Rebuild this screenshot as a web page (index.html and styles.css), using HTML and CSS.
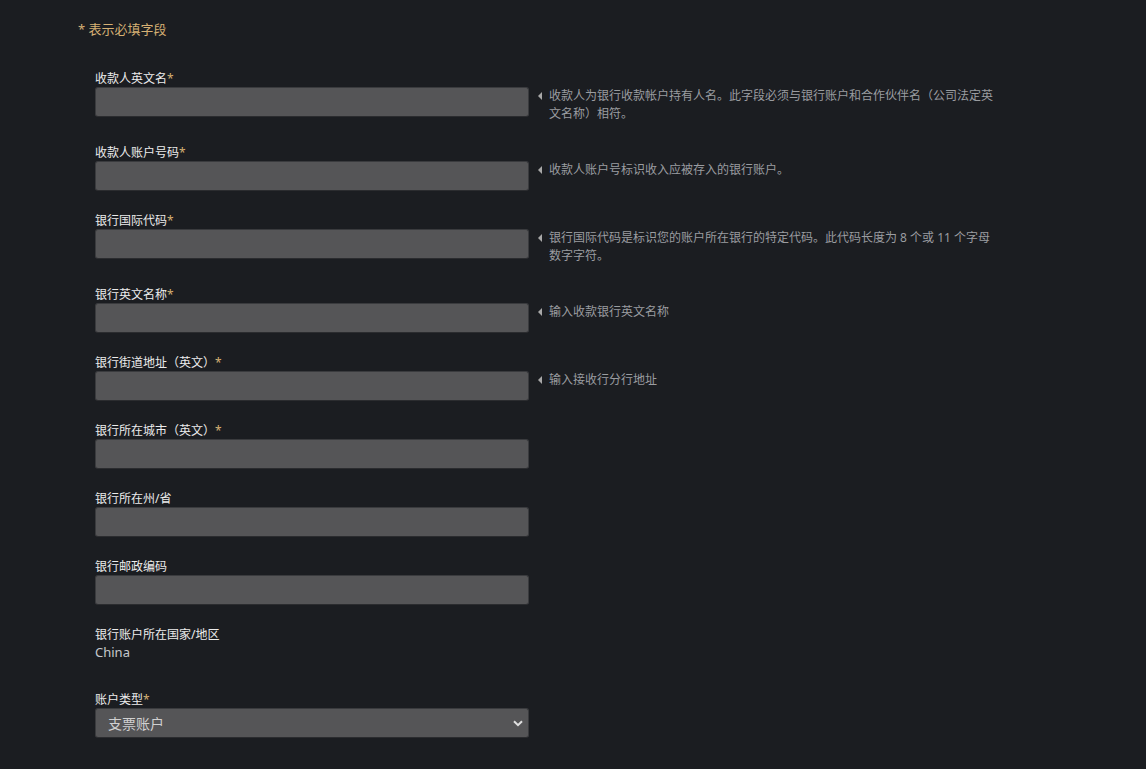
FILE: index.html
```html
<!DOCTYPE html>
<html lang="zh-CN">
<head>
    <meta charset="UTF-8">
    <title>银行账户信息</title>
    <link rel="stylesheet" href="styles.css">
</head>
<body>
    <div class="page">
        <p class="required-note">* 表示必填字段</p>

        <div class="fields">
            <div class="field">
                <label for="payeeName">收款人英文名<span class="star">*</span></label>
                <div class="field-row">
                    <input type="text" id="payeeName">
                    <div class="hint">收款人为银行收款帐户持有人名。此字段必须与银行账户和合作伙伴名（公司法定英文名称）相符。</div>
                </div>
            </div>

            <div class="field">
                <label for="accountNo">收款人账户号码<span class="star">*</span></label>
                <div class="field-row">
                    <input type="text" id="accountNo">
                    <div class="hint">收款人账户号标识收入应被存入的银行账户。</div>
                </div>
            </div>

            <div class="field">
                <label for="swift">银行国际代码<span class="star">*</span></label>
                <div class="field-row">
                    <input type="text" id="swift">
                    <div class="hint">银行国际代码是标识您的账户所在银行的特定代码。此代码长度为 8 个或 11 个字母数字字符。</div>
                </div>
            </div>

            <div class="field">
                <label for="bankName">银行英文名称<span class="star">*</span></label>
                <div class="field-row">
                    <input type="text" id="bankName">
                    <div class="hint">输入收款银行英文名称</div>
                </div>
            </div>

            <div class="field">
                <label for="bankStreet">银行街道地址（英文）<span class="star">*</span></label>
                <div class="field-row">
                    <input type="text" id="bankStreet">
                    <div class="hint">输入接收行分行地址</div>
                </div>
            </div>

            <div class="field">
                <label for="bankCity">银行所在城市（英文）<span class="star">*</span></label>
                <div class="field-row">
                    <input type="text" id="bankCity">
                </div>
            </div>

            <div class="field">
                <label for="bankState">银行所在州/省</label>
                <div class="field-row">
                    <input type="text" id="bankState">
                </div>
            </div>

            <div class="field">
                <label for="bankZip">银行邮政编码</label>
                <div class="field-row">
                    <input type="text" id="bankZip">
                </div>
            </div>

            <div class="field field-static">
                <label>银行账户所在国家/地区</label>
                <div class="static-value">China</div>
            </div>

            <div class="field">
                <label for="accountType">账户类型<span class="star">*</span></label>
                <div class="field-row">
                    <div class="select-wrap">
                        <select id="accountType">
                            <option>支票账户</option>
                            <option>储蓄账户</option>
                        </select>
                        <svg class="chevron" width="10" height="7" viewBox="0 0 10 7">
                            <path d="M1 1.2 L5 5.2 L9 1.2" fill="none" stroke="#e0e0e0" stroke-width="2"/>
                        </svg>
                    </div>
                </div>
            </div>
        </div>
    </div>
</body>
</html>
```

FILE: styles.css
```css
body {
    margin: 0;
    background-color: #1b1d21;
    font-family: "Noto Sans", "Noto Sans CJK SC", sans-serif;
    color: #e4e4e4;
}
.page {
    padding: 19px 0 0 78px;
    height: 750px;
    overflow: hidden;
}
.required-note {
    margin: 0;
    font-size: 13px;
    line-height: 20px;
    color: #d6b074;
}
.fields {
    padding: 32px 0 0 17px;
}
.field {
    margin-bottom: 22px;
}
.field label {
    display: block;
    height: 15px;
    font-size: 12px;
    line-height: 15px;
    margin-bottom: 1px;
    color: #ececec;
}
.star {
    color: #d6b074;
}
.field-row {
    display: flex;
    align-items: flex-start;
}
input, select {
    box-sizing: border-box;
    width: 434px;
    height: 30px;
    margin: 0;
    padding: 0 12px;
    background-color: #555557;
    border: 1px solid #3a3b3e;
    border-bottom-color: #2b2c2f;
    border-radius: 3px;
    color: #d0d0d0;
    font-family: inherit;
    font-size: 14px;
    outline: none;
}
.hint {
    position: relative;
    width: 446px;
    margin-left: 20px;
    font-size: 12px;
    line-height: 18px;
    color: #9a9ca0;
}
.hint::before {
    content: "";
    position: absolute;
    left: -11px;
    top: 5px;
    border-top: 4px solid transparent;
    border-bottom: 4px solid transparent;
    border-right: 4px solid #a8a8a8;
}
.field-static {
    margin-bottom: 31px;
}
.static-value {
    font-size: 13px;
    line-height: 18px;
    color: #c6c8cc;
}
.select-wrap {
    position: relative;
}
select {
    appearance: none;
    -webkit-appearance: none;
}
.chevron {
    position: absolute;
    right: 6px;
    top: 12px;
    pointer-events: none;
}
```
